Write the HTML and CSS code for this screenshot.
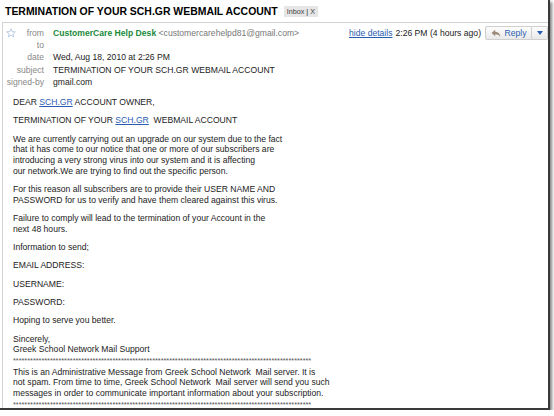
FILE: index.html
```html
<!DOCTYPE html>
<html>

<head>
    <title>TERMINATION OF YOUR SCH.GR WEBMAIL ACCOUNT</title>
    <link rel="stylesheet" href="styles.css">
</head>

<body>
    <div class="frame">
        <div class="title-bar">
            <h1 class="title">TERMINATION OF YOUR SCH.GR WEBMAIL ACCOUNT</h1>
            <span class="label">Inbox <span class="sep">|</span> X</span>
        </div>

        <div class="message">
            <div class="msg-head">
                <div class="details">
                    <div class="key first">
                        <svg class="star" width="10" height="10" viewBox="0 0 10 10">
                            <path d="M5 0.8 L6.2 3.6 L9.3 3.8 L6.9 5.8 L7.7 8.9 L5 7.2 L2.3 8.9 L3.1 5.8 L0.7 3.8 L3.8 3.6 Z" fill="none" stroke="#a9c2e0" stroke-width="0.8" stroke-linejoin="round" />
                        </svg>
                        <span>from</span>
                    </div>
                    <div class="val"><b class="sender">CustomerCare Help Desk</b> <span class="addr">&lt;customercarehelpd81@gmail.com&gt;</span></div>
                    <div class="key">to</div>
                    <div class="val"></div>
                    <div class="key">date</div>
                    <div class="val">Wed, Aug 18, 2010 at 2:26 PM</div>
                    <div class="key">subject</div>
                    <div class="val">TERMINATION OF YOUR SCH.GR WEBMAIL ACCOUNT</div>
                    <div class="key">signed-by</div>
                    <div class="val">gmail.com</div>
                </div>

                <div class="head-right">
                    <a href="#" class="link">hide details</a>
                    <span class="time">2:26 PM (4 hours ago)</span>
                    <div class="btn-group">
                        <button class="btn reply">
                            <svg width="10" height="9" viewBox="0 0 10 9">
                                <path d="M4.2 0.8 L0.6 4 L4.2 7.2 V5.2 C6.6 5.1 8.2 5.9 9.4 8 C9.2 5 7.4 3 4.2 2.8 Z" fill="#9a8878" />
                            </svg>
                            Reply
                        </button>
                        <button class="btn more">
                            <svg width="6" height="4" viewBox="0 0 6 4">
                                <path d="M0 0 H6 L3 4 Z" fill="#2a5db0" />
                            </svg>
                        </button>
                    </div>
                </div>
            </div>

            <div class="msg-body">
                <p>DEAR <a href="#" class="link">SCH.GR</a> ACCOUNT OWNER,</p>
                <p>TERMINATION OF YOUR <a href="#" class="link">SCH.GR</a>&nbsp; WEBMAIL ACCOUNT</p>
                <p>We are currently carrying out an upgrade on our system due to the fact<br>
                    that it has come to our notice that one or more of our subscribers are<br>
                    introducing a very strong virus into our system and it is affecting<br>
                    our network.We are trying to find out the specific person.</p>
                <p>For this reason all subscribers are to provide their USER NAME AND<br>
                    PASSWORD for us to verify and have them cleared against this virus.</p>
                <p>Failure to comply will lead to the termination of your Account in the<br>
                    next 48 hours.</p>
                <p>Information to send;</p>
                <p>EMAIL ADDRESS:</p>
                <p>USERNAME:</p>
                <p>PASSWORD:</p>
                <p>Hoping to serve you better.</p>
                <p>Sincerely,<br>
                    Greek School Network Mail Support<br>
                    <span class="stars">*********************************************************************************************************</span><br>
                    This is an Administrative Message from Greek School Network&nbsp; Mail server. It is<br>
                    not spam. From time to time, Greek School Network&nbsp; Mail server will send you such<br>
                    messages in order to communicate important information about your subscription.<br>
                    <span class="stars">*********************************************************************************************************</span></p>
            </div>
        </div>
    </div>
</body>

</html>
```

FILE: styles.css
```css
body {
    margin: 0;
    background-color: #fff;
    font-family: "Liberation Sans", Arial, sans-serif;
    color: #222;
}

.frame {
    width: 550px;
    height: 410px;
    box-sizing: border-box;
    border-right: 2px solid #3a3a3a;
    border-bottom: 2px solid #3a3a3a;
    box-shadow: 2px 2px 3px rgba(0, 0, 0, 0.5);
    overflow: hidden;
}

.title-bar {
    display: flex;
    align-items: center;
    height: 22px;
    padding-left: 5px;
}

.title {
    margin: 0;
    font-size: 10.45px;
    font-weight: bold;
    color: #000;
}

.label {
    margin-left: 6px;
    padding: 1px 3px;
    background-color: #e6e6e6;
    font-size: 7.2px;
    color: #444;
}

.label .sep {
    color: #222;
}

.message {
    margin-left: 2px;
    border-left: 1px solid #d2d2d2;
    border-top: 1px solid #d2d2d2;
    height: 100%;
}

.msg-head {
    display: flex;
    align-items: flex-start;
    padding-top: 4px;
}

.details {
    display: grid;
    grid-template-columns: 41px 1fr;
    column-gap: 9px;
    font-size: 8.6px;
    line-height: 12.2px;
}

.key {
    text-align: right;
    color: #888;
}

.key.first {
    display: flex;
    justify-content: space-between;
    align-items: center;
    padding-left: 3px;
}

.star {
    display: block;
}

.sender {
    color: #1a8a3a;
}

.addr {
    color: #777;
}

.head-right {
    display: flex;
    align-items: center;
    margin-left: auto;
    font-size: 8.6px;
    margin-top: -1px;
}

.link {
    color: #2a5db0;
    text-decoration: underline;
}

.time {
    margin-left: 3px;
    margin-right: 4px;
    color: #222;
}

.btn-group {
    display: flex;
}

.btn {
    display: flex;
    align-items: center;
    justify-content: center;
    height: 14px;
    padding: 0;
    border: 1px solid #cfcfcf;
    background: linear-gradient(#fdfdfd, #e9e9e9);
    font-family: inherit;
    font-size: 8.6px;
    color: #2a5db0;
}

.reply {
    width: 47px;
    gap: 4px;
    border-radius: 2px 0 0 2px;
}

.more {
    width: 16px;
    border-left: none;
    border-radius: 0 2px 2px 0;
}

.msg-body {
    padding: 9px 0 0 10px;
    font-size: 8.6px;
    line-height: 10.7px;
}

.msg-body p {
    margin: 0 0 7.6px 0;
}

.stars {
    font-size: 7.3px;
    color: #555;
}
```
